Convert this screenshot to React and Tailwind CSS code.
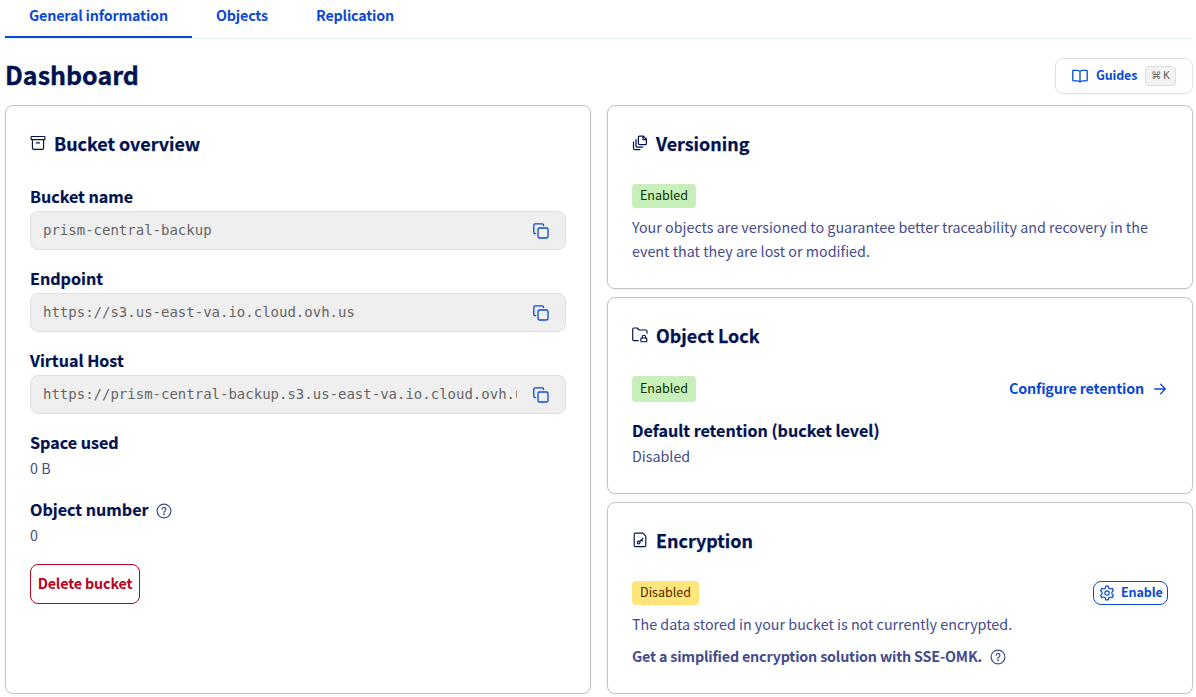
import React from "react";

const svgProps = {
  viewBox: "0 0 16 16",
  width: 16,
  height: 16,
  fill: "none",
  stroke: "currentColor",
  strokeLinecap: "round",
  strokeLinejoin: "round",
};

function ArchiveIcon() {
  return (
    <svg {...svgProps} strokeWidth="1.15">
      <rect x="1.1" y="1.5" width="13.8" height="3.1" rx="0.6" />
      <path d="M2.4 4.600v8.400a1.400 1.400 0 0 0 1.400 1.400h8.400a1.400 1.400 0 0 0 1.400-1.400V4.600M6.500 7.900h3" />
    </svg>
  );
}

function VersionsIcon() {
  return (
    <svg {...svgProps} strokeWidth="1.25">
      <path d="M7.400 1.100h3.900l3.100 3.100v4.200a1.200 1.200 0 0 1-1.200 1.200H7.600a1.200 1.200 0 0 1-1.200-1.200V2.300a1.200 1.200 0 0 1 1.200-1.200ZM11 1.300v3.200h3.200M4 4.600v6.300a1.200 1.200 0 0 0 1.200 1.200h5.600M1.500 7.200v6.100a1.200 1.200 0 0 0 1.200 1.200h5.200" />
    </svg>
  );
}

function FolderLockIcon() {
  return (
    <svg {...svgProps} strokeWidth="1.15">
      <path d="M6.300 13.600H2a1.300 1.300 0 0 1-1.300-1.300V2.200A1.200 1.200 0 0 1 1.900 1h3.300l2 2h6.600A1.200 1.200 0 0 1 15 4.200v2" />
      <rect x="8.900" y="11" width="5.900" height="3.700" rx="0.700" />
      <path d="M10.200 11V9.900a1.700 1.700 0 0 1 3.400 0V11" />
    </svg>
  );
}

function FileKeyIcon() {
  return (
    <svg {...svgProps} strokeWidth="1.15">
      <path d="M3.400 1.100h7.400l3 3v9.300a1.200 1.200 0 0 1-1.200 1.200H3.400a1.200 1.200 0 0 1-1.200-1.200V2.300a1.200 1.200 0 0 1 1.200-1.200Z" />
      <circle cx="6.600" cy="10.500" r="1.400" />
      <path d="M7.700 9.500l3.200-3.100M9.300 8l1.100 1" />
    </svg>
  );
}

function CopyIcon() {
  return (
    <svg {...svgProps} strokeWidth="1.300">
      <rect x="5" y="5" width="10" height="10" rx="1.400" />
      <path d="M2.700 10.600H2.200A1.400 1.400 0 0 1 .8 9.200V2.200A1.400 1.400 0 0 1 2.200.8h7a1.400 1.400 0 0 1 1.400 1.400v.3" />
    </svg>
  );
}

function HelpIcon() {
  return (
    <svg {...svgProps} strokeWidth="1.200">
      <circle cx="8" cy="8" r="6.900" />
      <path d="M6.100 6.300a1.900 1.900 0 1 1 2.900 1.600c-.7.400-1 .8-1 1.400" />
      <circle cx="8" cy="11.300" r="0.350" fill="currentColor" />
    </svg>
  );
}

function BookIcon() {
  return (
    <svg {...svgProps} strokeWidth="1.300">
      <path d="M8 3.600C7.300 2.700 6.500 2.300 5.500 2.300H1.300a.5.5 0 0 0-.5.500v9.500a.5.5 0 0 0 .5.500h4.400c1 0 1.800.4 2.300 1.300.5-.9 1.300-1.300 2.300-1.300h4.400a.5.5 0 0 0 .5-.5V2.800a.5.5 0 0 0-.5-.5h-4.200c-1 0-1.800.4-2.500 1.300Zm0 0v10.300" />
    </svg>
  );
}

function GearIcon() {
  return (
    <svg {...svgProps} strokeWidth="1.200">
      <path d="M6.700 1.200h2.600l.5 2 1.300.8 2-.6 1.300 2.200-1.500 1.500v1.800l1.500 1.500-1.300 2.200-2-.6-1.300.8-.5 2H6.700l-.5-2-1.300-.8-2 .6-1.300-2.200 1.500-1.500V7.100L1.600 5.600l1.300-2.200 2 .6 1.300-.8Z" />
      <circle cx="8" cy="8" r="2.200" />
    </svg>
  );
}

function ArrowIcon() {
  return (
    <svg {...svgProps} strokeWidth="1.300">
      <path d="M2.700 8h10.500M8.700 3.300 13.300 8l-4.600 4.700" />
    </svg>
  );
}

function Card({ icon, title, className, children }) {
  return (
    <section className={"rounded-[8px] border border-[#c3c3c3] bg-white px-6 pt-6 shadow-[0_1px_3px_rgba(0,0,0,0.06)] " + className}>
      <h2 className="flex h-[26px] items-center gap-2 whitespace-nowrap text-[17.9px] font-bold leading-[26px] text-[#00124f] [-webkit-text-stroke:0.25px_currentColor]">
        <span className="-mt-px">{icon}</span>
        {title}
      </h2>
      <div className="pt-7">{children}</div>
    </section>
  );
}

function Label({ children }) {
  return (
    <div className="whitespace-nowrap text-[16.1px] font-bold leading-6 text-[#00124f] [-webkit-text-stroke:0.2px_currentColor]">
      {children}
    </div>
  );
}

function ClipboardField({ label, value }) {
  return (
    <div className="mb-4">
      <Label>{label}</Label>
      <div className="mt-[3px] flex h-[39px] items-center justify-between rounded-[8px] border border-[#e0e0e0] bg-[#efefef] pl-3 pr-4">
        <span className="w-[474px] overflow-hidden whitespace-nowrap pb-[2px] font-['DejaVu_Sans_Mono',monospace] text-[14px] leading-5 text-[#666666]">
          {value}
        </span>
        <span className="text-[#0a49d6]">
          <CopyIcon />
        </span>
      </div>
    </div>
  );
}

function Badge({ className, children }) {
  return (
    <span className={"flex items-center justify-center rounded-[4px] pb-[2px] text-[12.5px] leading-5 " + className}>
      {children}
    </span>
  );
}

export default function App() {
  return (
    <main className="h-[697px] w-[1196px] overflow-hidden bg-white pl-[5px] pr-[3px] font-['Noto_Sans_CJK_SC',sans-serif] text-[14.3px] leading-6 text-[#434b8c]">
      <nav className="flex h-[39px] whitespace-nowrap border-b border-[#def0f8] font-bold tracking-[-0.18px] text-[#0a49d6]">
        <a className="h-[38px] w-[187px] border-b-2 border-[#0a49d6] pl-6 pt-[3px]">General information</a>
        <a className="w-[100px] pl-6 pt-[3px]">Objects</a>
        <a className="pl-6 pt-[3px]">Replication</a>
      </nav>

      <header className="flex h-[66px] items-start justify-between">
        <h1 className="pt-[19px] text-[25px] font-bold leading-8 text-[#00124f] [-webkit-text-stroke:0.35px_currentColor]">Dashboard</h1>
        <button className="mt-[19px] flex h-9 w-[138px] items-center rounded-[8px] border border-[#e2e2e2] pl-4 text-[12.5px] font-bold leading-5 text-[#0a49d6] shadow-[0_1px_2px_rgba(0,0,0,0.04)]">
          <BookIcon />
          <span className="ml-2 w-[49px] pb-[2px] text-left tracking-[-0.18px]">Guides</span>
          <kbd className="flex h-5 w-[31px] items-center justify-center rounded-[4px] border border-[#dcdcdc] bg-[#f2f2f2] font-['DejaVu_Sans_Mono',monospace] text-[11px] font-normal text-[#666666]">
            <span className="font-['DejaVu_Sans',sans-serif] text-[10px]">⌘</span>
            <span className="ml-[2px]">K</span>
          </kbd>
        </button>
      </header>

      <div className="grid grid-cols-2 gap-4">
        <Card icon={<ArchiveIcon />} title="Bucket overview" className="h-[589px]">
          <ClipboardField label="Bucket name" value="prism-central-backup" />
          <ClipboardField label="Endpoint" value="https://s3.us-east-va.io.cloud.ovh.us" />
          <ClipboardField label="Virtual Host" value="https://prism-central-backup.s3.us-east-va.io.cloud.ovh.us" />
          <Label>Space used</Label>
          <div className="mb-[17px] mt-[2px]">0 B</div>
          <div className="flex items-center gap-[7px]">
            <Label>Object number</Label>
            <span className="mt-[3px]">
              <HelpIcon />
            </span>
          </div>
          <div className="mt-[2px]">0</div>
          <button className="mt-[17px] flex h-10 w-[110px] items-center justify-center whitespace-nowrap rounded-[8px] border border-[#bf0020] pb-[2px] font-bold tracking-[-0.15px] text-[#bf0020]">
            Delete bucket
          </button>
        </Card>

        <div className="flex flex-col gap-2">
          <Card icon={<VersionsIcon />} title="Versioning" className="h-[184px]">
            <Badge className="h-6 w-16 bg-[#c7f0ba] text-[#113000]">Enabled</Badge>
            <p className="mt-[7px] whitespace-nowrap tracking-[0.01px]">
              Your objects are versioned to guarantee better traceability and recovery in the
              <br />
              event that they are lost or modified.
            </p>
          </Card>

          <Card icon={<FolderLockIcon />} title="Object Lock" className="h-[197px]">
            <div className="flex items-center justify-between">
              <Badge className="h-[26px] w-16 bg-[#c7f0ba] text-[#113000]">Enabled</Badge>
              <a className="flex items-center gap-2 whitespace-nowrap font-bold tracking-[-0.18px] text-[#0a49d6]">
                <span className="-mt-[2px]">Configure retention</span>
                <ArrowIcon />
              </a>
            </div>
            <div className="mt-4">
              <Label>Default retention (bucket level)</Label>
            </div>
            <div className="mt-[2px]">Disabled</div>
          </Card>

          <Card icon={<FileKeyIcon />} title="Encryption" className="h-[192px]">
            <div className="flex items-center justify-between">
              <Badge className="h-6 w-[67px] bg-[#ffe57a] text-[#4d2600]">Disabled</Badge>
              <button className="flex h-6 w-[75px] items-center gap-1.5 rounded-[8px] border border-[#0a49d6] pl-[5px] text-[12.5px] font-bold leading-5 tracking-[-0.1px] text-[#0a49d6]">
                <GearIcon />
                <span className="-mt-[2px]">Enable</span>
              </button>
            </div>
            <p className="mt-[7px]">The data stored in your bucket is not currently encrypted.</p>
            <div className="mt-2 flex items-center gap-2 whitespace-nowrap font-bold tracking-[-0.18px]">
              Get a simplified encryption solution with SSE-OMK.
              <span className="mt-px">
                <HelpIcon />
              </span>
            </div>
          </Card>
        </div>
      </div>
    </main>
  );
}
